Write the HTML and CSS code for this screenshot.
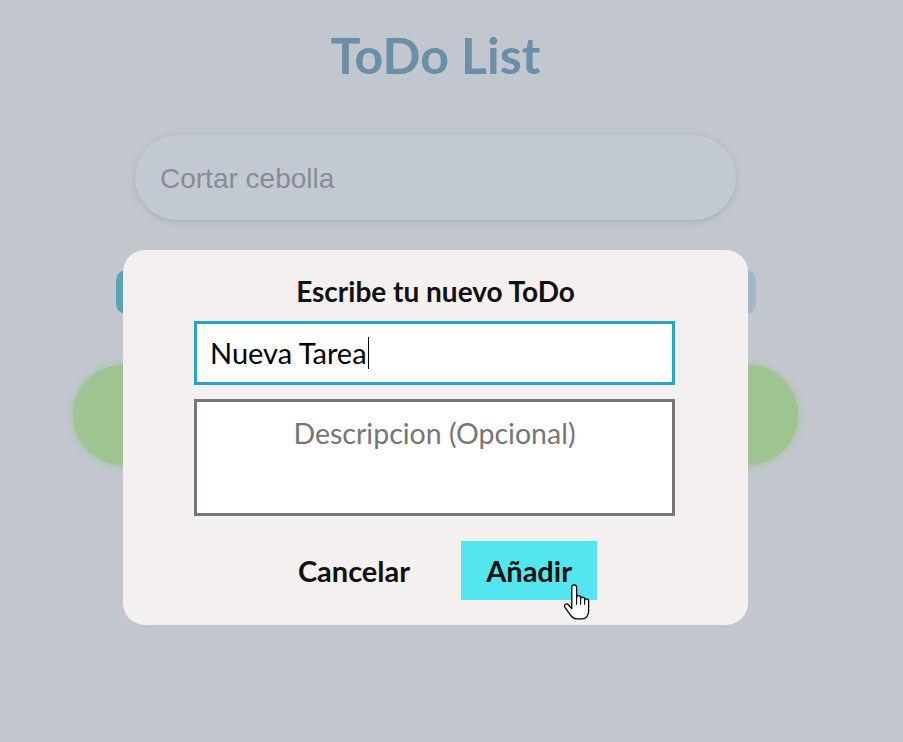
FILE: index.html
```html
<!DOCTYPE html>
<html lang="es">
<head>
<meta charset="utf-8">
<title>ToDo List</title>
<link rel="stylesheet" href="styles.css">
</head>
<body>
<main class="app">
  <h1 class="title">ToDo List</h1>
  <div class="search"><span class="search-ph">Cortar cebolla</span></div>
  <div class="add-bar"></div>
  <div class="item-row">
    <span class="dot"></span>
    <span class="dot"></span>
  </div>
</main>

<div class="modal">
  <h2 class="modal-title">Escribe tu nuevo ToDo</h2>
  <div class="field field-focus"><span class="field-text">Nueva Tarea</span><span class="caret"></span></div>
  <div class="field field-area"><span class="area-ph">Descripcion (Opcional)</span></div>
  <div class="actions">
    <span class="btn-cancel">Cancelar</span>
    <span class="btn-add">Añadir</span>
  </div>
</div>

<svg class="cursor" width="28" height="36" viewBox="0 0 17.5 22.5" aria-hidden="true">
  <path d="M5.5 2 a1.5 1.5 0 0 1 3 0 V8.5 a1.25 1.25 0 0 1 2.5 0 V9.5 a1.25 1.25 0 0 1 2.5 0 V10.5 a1.25 1.25 0 0 1 2.5 0 V17 c0 2.6 -1.6 4.8 -4 4.8 H8.3 c-1.5 0 -2.6 -1 -3.6 -2.4 L1.2 14.6 a1.3 1.3 0 0 1 2.1 -1.6 L5.5 15.4 Z" fill="#fff" stroke="#000" stroke-width="0.8" stroke-linejoin="round"/>
  <path d="M8.5 8.5 V13 M11 9.5 V13 M13.5 10.5 V13" fill="none" stroke="#000" stroke-width="0.7"/>
</svg>
</body>
</html>
```

FILE: styles.css
```css
* { box-sizing: border-box; }

html, body {
  margin: 0;
  height: 100%;
}

body {
  background: #c2c7cf;
  font-family: Lato, "Noto Sans", sans-serif;
  overflow: hidden;
}

.app {
  display: flex;
  flex-direction: column;
  align-items: center;
  padding-top: 22px;
  padding-right: 32px;
}

.title {
  margin: 0;
  font-size: 50px;
  font-weight: 700;
  color: #6a8fa9;
  line-height: 66px;
}

.search {
  margin-top: 47px;
  width: 601px;
  height: 85px;
  border-radius: 43px;
  background: #c3c9d1;
  box-shadow: 0 2px 6px rgba(120, 130, 145, 0.35);
  display: flex;
  align-items: center;
  padding-left: 25px;
}

.search-ph {
  font-family: "Liberation Sans", Arial, sans-serif;
  font-size: 28px;
  color: #878d96;
  padding-top: 2px;
}

.add-bar {
  margin-top: 50px;
  width: 640px;
  height: 44px;
  border-radius: 10px;
  background: linear-gradient(to right, #5f9fba, #7aaac0 60%, #a2b7c7);
}

.item-row {
  margin-top: 51px;
  width: 725px;
  display: flex;
  justify-content: space-between;
}

.dot {
  width: 100px;
  height: 100px;
  border-radius: 50%;
  background: #9dc491;
  box-shadow: 0 0 6px 1px rgba(157, 196, 145, 0.8);
}

.modal {
  position: absolute;
  left: 123px;
  top: 250px;
  width: 625px;
  height: 375px;
  background: #f4f0ef;
  border-radius: 22px;
  display: flex;
  flex-direction: column;
  align-items: center;
  padding-top: 24px;
}

.modal-title {
  margin: 0;
  font-size: 28px;
  font-weight: 700;
  line-height: 34px;
  color: #111;
}

.field {
  width: 481px;
  margin-right: 2px;
  background: #fff;
  border: 3px solid #767676;
}

.field-focus {
  margin-top: 13px;
  height: 64px;
  border-color: #27a5c5;
  display: flex;
  align-items: center;
  padding-left: 13px;
}

.field-text {
  font-size: 29px;
  color: #000;
  line-height: 36px;
}

.caret {
  width: 1px;
  height: 32px;
  background: #000;
  margin-left: 1px;
}

.field-area {
  margin-top: 14px;
  height: 117px;
  text-align: center;
  padding-top: 13px;
}

.area-ph {
  font-size: 28.5px;
  color: #767676;
  line-height: 36px;
}

.actions {
  margin-top: 25px;
  display: flex;
  align-items: center;
  gap: 51px;
  padding-left: 24px;
}

.btn-cancel {
  font-size: 29px;
  font-weight: 700;
  color: #111;
}

.btn-add {
  width: 136px;
  height: 59px;
  background: #53e6ee;
  font-size: 29px;
  font-weight: 700;
  color: #111;
  display: flex;
  align-items: center;
  justify-content: center;
}

.cursor {
  position: absolute;
  left: 563px;
  top: 584px;
}
```
